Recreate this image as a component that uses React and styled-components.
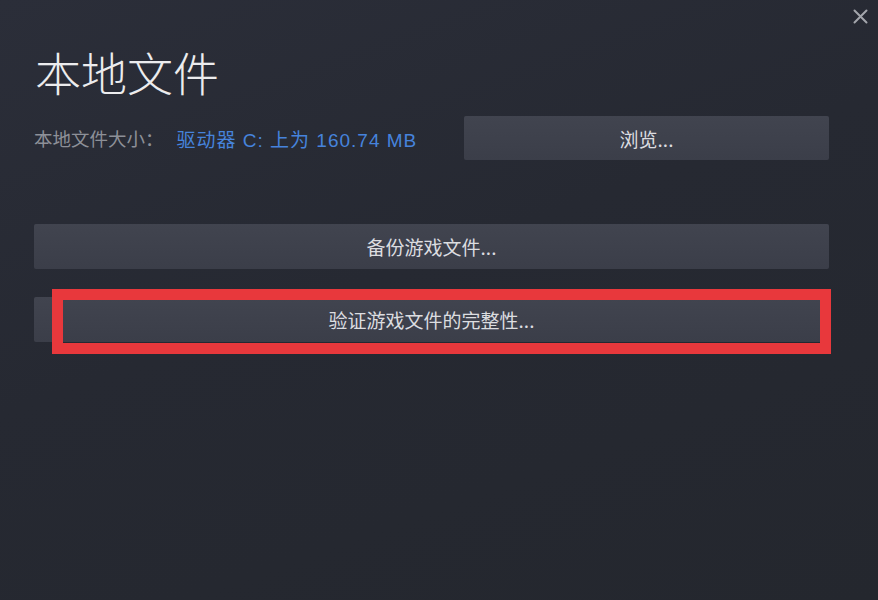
import React from "react";
import styled, { createGlobalStyle } from "styled-components";

const Global = createGlobalStyle`
  html, body { margin: 0; padding: 0; background: #252830; }
  * { box-sizing: border-box; }
`;

const Dialog = styled.div`
  position: relative;
  width: 878px;
  height: 600px;
  overflow: hidden;
  padding: 48px 49px 0 34px;
  background: linear-gradient(160deg, #2b2e39 0%, #262932 45%, #24272e 100%);
  font-family: "Noto Sans CJK SC", "Noto Sans", sans-serif;
  display: flex;
  flex-direction: column;
`;

const Close = styled.button`
  position: absolute;
  top: 7px;
  right: 9px;
  width: 18px;
  height: 18px;
  padding: 0;
  border: 0;
  background: transparent;
  display: flex;
  align-items: center;
  justify-content: center;
`;

const Title = styled.h1`
  margin: 0 0 22px 1px;
  font-size: 46px;
  line-height: 46px;
  font-weight: 300;
  color: #ececee;
  letter-spacing: 0;
`;

const InfoRow = styled.div`
  display: flex;
  align-items: center;
  justify-content: space-between;
`;

const Info = styled.div`
  font-size: 18.5px;
  color: #8d9098;
  display: flex;
  align-items: center;
`;

const Drive = styled.span`
  color: #4683dc;
  margin-left: 13px;
  font-family: "Liberation Sans", "Noto Sans CJK SC", sans-serif;
  font-size: 19px;
  letter-spacing: 1px;
`;

const Button = styled.button`
  position: relative;
  height: ${(p) => p.$h || 45}px;
  width: ${(p) => (p.$w ? `${p.$w}px` : "100%")};
  border: 0;
  border-radius: 2px;
  background: linear-gradient(180deg, #41444f 0%, #3b3e49 100%);
  color: #dcdde0;
  font-family: inherit;
  font-size: 19px;
  padding: 0;
  display: flex;
  align-items: center;
  justify-content: center;
`;

const Stack = styled.div`
  display: flex;
  flex-direction: column;
  gap: 28px;
  margin-top: 64px;
`;

const Highlight = styled.div`
  position: absolute;
  left: 18px;
  right: -2px;
  top: -8px;
  bottom: -12px;
  border: 11px solid #e8383c;
  pointer-events: none;
`;

export default function App() {
  return (
    <>
      <Global />
      <Dialog>
        <Close aria-label="close">
          <svg width="15" height="15" viewBox="0 0 15 15">
            <path d="M1.5 1.5 L13.5 13.5 M13.5 1.5 L1.5 13.5" stroke="#a3a5ab" strokeWidth="2" strokeLinecap="round" />
          </svg>
        </Close>
        <Title>本地文件</Title>
        <InfoRow>
          <Info>
            本地文件大小：<Drive>驱动器 C: 上为 160.74 MB</Drive>
          </Info>
          <Button $w={365} $h={44}>浏览...</Button>
        </InfoRow>
        <Stack>
          <Button>备份游戏文件...</Button>
          <Button>
            验证游戏文件的完整性...
            <Highlight />
          </Button>
        </Stack>
      </Dialog>
    </>
  );
}
